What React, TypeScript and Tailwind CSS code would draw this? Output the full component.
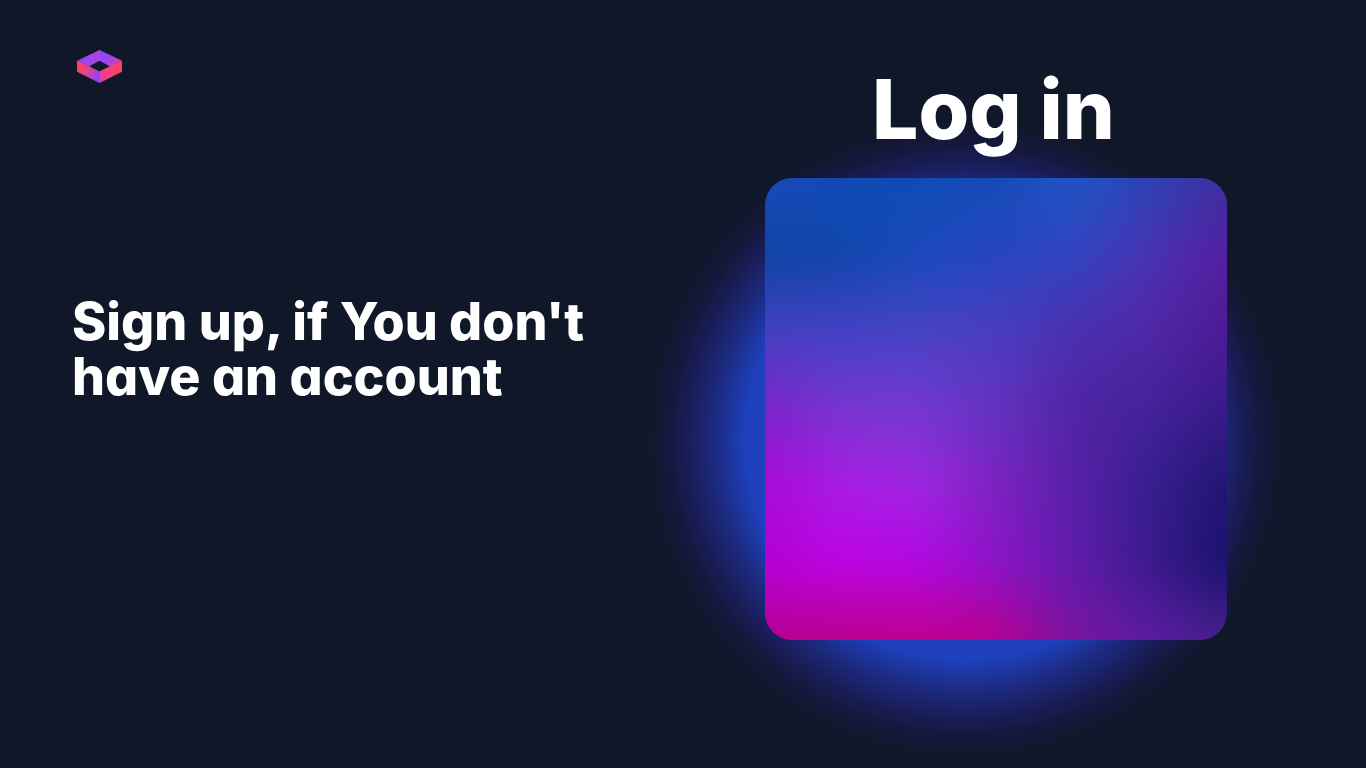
const STEP = 100;

// Vertical colour runs of the mesh, left to right; each run is spread evenly from top to bottom.
const meshColumns: string[][] = [
  ["#1c4abb", "#0b45a4", "#4640c0", "#7c24cc", "#aa0ad8", "#b400d4", "#b80090"],
  ["#1249b6", "#1046ac", "#4242c4", "#7836d0", "#aa1ce4", "#bc04e4", "#b8008c"],
  ["#104bb5", "#1a4abc", "#4843c4", "#7438d0", "#a026e0", "#b406e4", "#c0008c"],
  ["#144bb8", "#2746be", "#4a3dc0", "#6432c0", "#7c22c0", "#8c14c8", "#b80090"],
  ["#2055c4", "#3244c0", "#4a30b0", "#5025a4", "#5820a8", "#601cac", "#7a14a0"],
  ["#2c42b4", "#4b32b4", "#5028a6", "#45229a", "#361f8e", "#3c1a8c", "#5c1ca2"],
  ["#3e2f9e", "#541fa0", "#4c1a94", "#381a88", "#201572", "#18126e", "#46208a"],
];

function MeshArt() {
  const size = STEP * (meshColumns.length - 1);
  return (
    <svg viewBox={`0 0 ${size} ${size}`} className="block h-full w-full" role="img" aria-label="Abstract gradient">
      <defs>
        <filter id="soften" filterUnits="userSpaceOnUse" x={-100} y={-100} width={size + 200} height={size + 200} colorInterpolationFilters="sRGB">
          <feGaussianBlur stdDeviation={20} />
        </filter>
        {meshColumns.map((colors, i) => (
          <g key={i}>
            <linearGradient id={`run${i}`} gradientUnits="userSpaceOnUse" x1={0} y1={0} x2={0} y2={size}>
              {colors.map((c, j) => (
                <stop key={j} offset={j / (colors.length - 1)} stopColor={c} />
              ))}
            </linearGradient>
            <linearGradient id={`ramp${i}`} gradientUnits="userSpaceOnUse" x1={(i - 1) * STEP} y1={0} x2={i * STEP} y2={0}>
              <stop offset={0} stopColor={i === 0 ? "#fff" : "#000"} />
              <stop offset={1} stopColor="#fff" />
            </linearGradient>
            <mask id={`fade${i}`} maskUnits="userSpaceOnUse" x={-100} y={-100} width={size + 200} height={size + 200}>
              <rect x={-100} y={-100} width={size + 200} height={size + 200} fill={`url(#ramp${i})`} />
            </mask>
          </g>
        ))}
      </defs>
      <g filter="url(#soften)">
        {meshColumns.map((_, i) => (
          <rect key={i} x={-100} y={-100} width={size + 200} height={size + 200} fill={`url(#run${i})`} mask={`url(#fade${i})`} />
        ))}
      </g>
    </svg>
  );
}

function Logo() {
  return (
    <svg viewBox="0 0 45 33" className="h-[33px] w-[45px]" aria-hidden="true">
      <defs>
        <linearGradient id="topLeft" gradientUnits="userSpaceOnUse" x1="3" y1="14" x2="22" y2="3">
          <stop offset="0" stopColor="#8b46ff" />
          <stop offset="1" stopColor="#b542dc" />
        </linearGradient>
        <linearGradient id="topRight" gradientUnits="userSpaceOnUse" x1="22.5" y1="5" x2="42" y2="14">
          <stop offset="0" stopColor="#8b46ff" />
          <stop offset="0.4" stopColor="#9a45f2" />
          <stop offset="1" stopColor="#d043b4" />
        </linearGradient>
        <linearGradient id="left" gradientUnits="userSpaceOnUse" x1="0" y1="14" x2="23" y2="26">
          <stop offset="0.1" stopColor="#ff4060" />
          <stop offset="0.45" stopColor="#e8428c" />
          <stop offset="1" stopColor="#8b46ff" />
        </linearGradient>
        <linearGradient id="right" gradientUnits="userSpaceOnUse" x1="22" y1="28" x2="45" y2="16">
          <stop offset="0" stopColor="#d843a8" />
          <stop offset="0.4" stopColor="#f4417a" />
          <stop offset="1" stopColor="#ff4060" />
        </linearGradient>
      </defs>
      <path d="M22.5 0H23V10.7H22.5L11.8 16.4L0 10.7Z" fill="url(#topLeft)" />
      <path d="M22.5 0L45 10.7L33.2 16.4L22.5 10.7Z" fill="url(#topRight)" />
      <path d="M0 10.7L11.8 16L22.5 21.6V33L0 21.7Z" fill="url(#left)" />
      <path d="M45 10.7L33.2 16L22.2 21.6V33H22.5L45 21.7Z" fill="url(#right)" />
    </svg>
  );
}

export default function App() {
  return (
    <main className="grid min-h-screen grid-cols-2 overflow-hidden bg-[#101728] font-['Inter',sans-serif] font-extrabold text-white [font-feature-settings:'cv11']">
      <section className="flex flex-col pl-[72px]">
        <header className="flex pt-[50px] pl-[5px]">
          <a href="#" aria-label="Home">
            <Logo />
          </a>
        </header>
        <h2 className="mt-[211px] text-[52px] leading-[55px]">
          Sign up, if You don't
          <br />
          have an account
        </h2>
      </section>
      <section className="flex flex-col items-center pt-[62px] pr-[58px]">
        <h1 className="relative z-10 pr-1 text-[82px] leading-[96px]">Log in</h1>
        <div className="relative mt-5 w-[74%] max-w-[462px]">
          <div className="absolute -top-[61px] -left-[123px] size-[646px] rounded-full bg-[radial-gradient(circle_closest-side,#1e40bc_0%,#1e40bc_68%,#1c2c84_77%,#1a1e5c_85%,#16173c_92%,#101728_100%)]" />
          <div className="relative aspect-square overflow-hidden rounded-[27px]">
            <MeshArt />
          </div>
        </div>
      </section>
    </main>
  );
}
